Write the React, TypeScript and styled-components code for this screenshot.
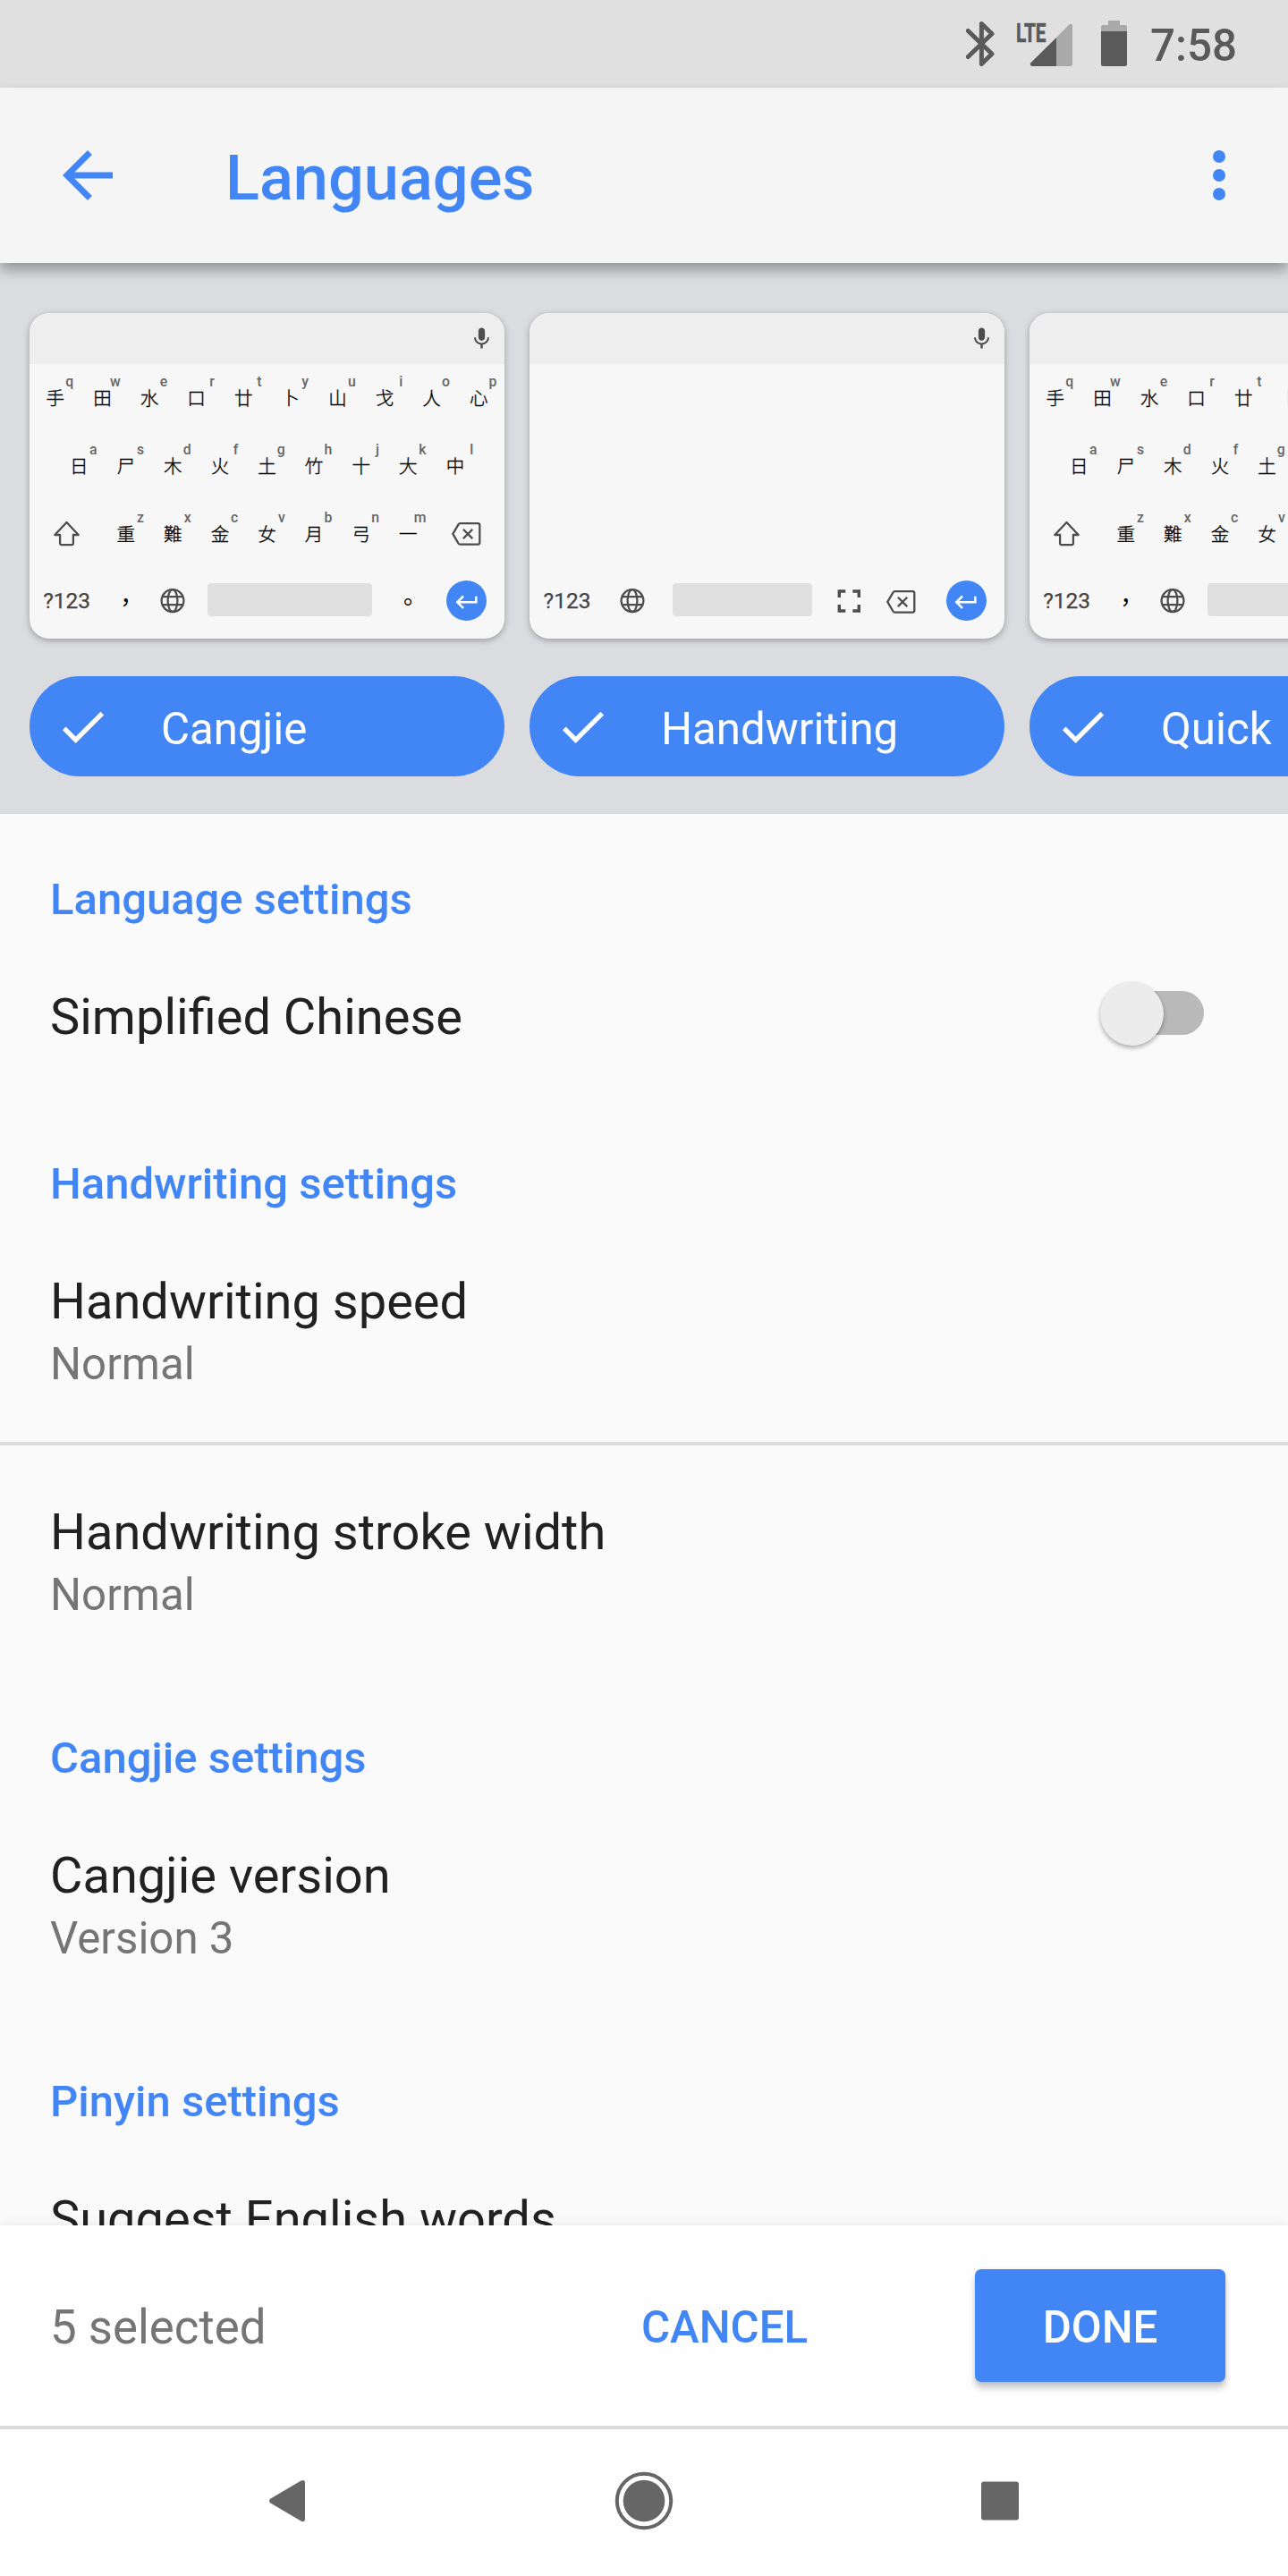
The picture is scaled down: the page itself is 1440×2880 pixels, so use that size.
import React from "react";
import styled, { createGlobalStyle } from "styled-components";

const BLUE = "#4286f5";
const KEY_ICON = "#4d4d4d";

const GlobalStyle = createGlobalStyle`
  * { box-sizing: border-box; }
  body { margin: 0; font-family: Roboto, "Noto Sans CJK TC", sans-serif; }
`;

const Screen = styled.div`
  width: 1440px;
  height: 2880px;
  display: flex;
  flex-direction: column;
  overflow: hidden;
  background: #fafafa;
`;

/* Status bar */
const StatusBar = styled.div`
  flex: none;
  height: 98px;
  padding-right: 57px;
  display: flex;
  justify-content: flex-end;
  background: #e0e0e0;
`;

const StatusIcons = styled.svg`
  width: 192px;
  height: 98px;
`;

const LteText = styled.text`
  font: 700 30px Roboto, sans-serif;
  fill: #5a5a5a;
  stroke: #5a5a5a;
  stroke-width: 0.6;
`;

const Clock = styled.div`
  width: 97px;
  margin-left: 14px;
  padding-top: 22px;
  font-size: 49.3px;
  font-weight: 500;
  line-height: 58px;
  color: #5a5a5a;
`;

/* App bar */
const AppBar = styled.header`
  flex: none;
  position: relative;
  z-index: 1;
  height: 196px;
  padding: 0 35px 0 56px;
  display: flex;
  align-items: center;
  background: #f5f5f5;
  box-shadow: 0 8px 14px rgba(0, 0, 0, 0.32);
`;

const BarIcon = styled.svg`
  width: 84px;
  height: 84px;
  fill: ${BLUE};
`;

const Title = styled.h1`
  flex: 1;
  margin: 0 0 0 112px;
  padding-top: 6px;
  font-size: 70.3px;
  font-weight: 500;
  line-height: 82px;
  color: ${BLUE};
`;

/* Layout previews */
const Strip = styled.section`
  flex: none;
  height: 616px;
  padding: 56px 0 0 33px;
  display: flex;
  gap: 28px;
  overflow: hidden;
  background: #dadce0;
`;

const Layout = styled.div`
  flex: none;
  width: 531px;
`;

const Card = styled.div`
  height: 364px;
  border-radius: 22px;
  overflow: hidden;
  background: #f7f7f7;
  box-shadow: 0 2px 7px rgba(0, 0, 0, 0.3);
`;

const Suggestions = styled.div`
  height: 57px;
  padding-right: 11px;
  display: flex;
  align-items: center;
  justify-content: flex-end;
  background: #eeeeee;
`;

const MicIcon = styled.svg`
  width: 29px;
  height: 29px;
  fill: ${KEY_ICON};
`;

const Keys = styled.div`
  padding: 0 2.5px;
`;

const KeyRow = styled.div<{ $lift?: boolean }>`
  height: 76px;
  display: flex;
  justify-content: center;
  padding-bottom: ${(p) => (p.$lift ? 1 : 0)}px;
`;

const Blank = styled.div`
  height: 228px;
`;

const Key = styled.div<{ $w?: number }>`
  flex: none;
  position: relative;
  width: ${(p) => p.$w ?? 52.6}px;
  display: flex;
  align-items: center;
  justify-content: center;
  font-family: "Noto Sans CJK TC", sans-serif;
  font-size: 20.5px;
  font-weight: 300;
  line-height: 30px;
  padding-bottom: 2px;
  color: #000;
  -webkit-text-stroke: 0.35px #000;
`;

const Hint = styled.span`
  position: absolute;
  top: 12px;
  right: 6px;
  font-family: Roboto, sans-serif;
  font-size: 15.8px;
  font-weight: 500;
  line-height: 15px;
  color: #666;
  -webkit-text-stroke: 0;
`;

const EnterSlot = styled(Key)`
  margin: 0 0.5px 0 auto;
`;

const Punctuation = styled(Key)`
  font-size: 26px;
  font-weight: 400;
  -webkit-text-stroke: 0;
`;

const SymbolKey = styled(Key)`
  font-family: Roboto, sans-serif;
  font-size: 24.5px;
  font-weight: 400;
  color: #444;
  -webkit-text-stroke: 0.25px #444;
`;

const SpaceBar = styled.div<{ $w: number }>`
  flex: none;
  width: ${(p) => p.$w}px;
  height: 37px;
  margin: 17px 13.5px 0 12.5px;
  border-radius: 4px;
  background: #e0e0e0;
`;

const EnterButton = styled.div`
  width: 45px;
  height: 45px;
  border-radius: 50%;
  display: flex;
  align-items: center;
  justify-content: center;
  padding-top: 3px;
  background: ${BLUE};
`;

const EnterIcon = styled.svg`
  width: 30.4px;
  height: 30.4px;
  fill: #fff;
`;

const KeyIcon = styled.svg`
  width: 36px;
  height: 32px;
  fill: none;
  stroke: ${KEY_ICON};
  stroke-width: 2.3;
`;

const Pill = styled.div`
  height: 112px;
  margin-top: 42px;
  padding-left: 28px;
  border-radius: 56px;
  display: flex;
  align-items: center;
  gap: 56px;
  overflow: hidden;
  font-size: 49.2px;
  line-height: 58px;
  color: #fff;
  background: ${BLUE};
`;

const CheckIcon = styled.svg`
  width: 63px;
  height: 63px;
  fill: #fff;
`;

const PillLabel = styled.span`
  padding-top: 5px;
`;

/* Settings */
const Settings = styled.main`
  flex: 1;
  min-height: 0;
  overflow: hidden;
`;

const SectionTitle = styled.h2`
  margin: 0;
  padding: 67px 56px 5px;
  font-size: 49px;
  font-weight: 500;
  line-height: 58px;
  color: ${BLUE};
`;

const Item = styled.div<{ $divided?: boolean }>`
  padding: 64px 94px 58px 56px;
  display: flex;
  align-items: flex-start;
  justify-content: space-between;
  border-bottom: ${(p) => (p.$divided ? "4px solid #dbdbdb" : "none")};
`;

const ItemTitle = styled.div`
  font-size: 56px;
  line-height: 66px;
  color: #212121;
`;

const ItemValue = styled.div`
  margin-top: 8px;
  font-size: 49.2px;
  line-height: 58px;
  color: #757575;
`;

const Toggle = styled.div`
  width: 116px;
  height: 71px;
  margin: -6px 0 1px;
  display: grid;
  align-items: center;
`;

const Track = styled.div`
  grid-area: 1 / 1;
  justify-self: end;
  width: 105px;
  height: 49px;
  margin-bottom: 2px;
  border-radius: 25px;
  background: #b9b9b9;
`;

const Thumb = styled.div`
  grid-area: 1 / 1;
  width: 71px;
  height: 71px;
  border-radius: 50%;
  background: #ececec;
  box-shadow: 0 3px 5px rgba(0, 0, 0, 0.28), 0 0 3px rgba(0, 0, 0, 0.08);
`;

/* Bottom */
const Actions = styled.footer`
  flex: none;
  position: relative;
  height: 228px;
  padding: 0 70px 0 56px;
  display: flex;
  align-items: center;
  border-bottom: 4px solid #dcdcdc;
  background: #fefefe;
  box-shadow: 0 0 12px rgba(0, 0, 0, 0.08);
`;

const Count = styled.div`
  flex: 1;
  padding-top: 3px;
  font-size: 52.8px;
  line-height: 62px;
  color: #757575;
`;

const Button = styled.button<{ $filled?: boolean }>`
  width: ${(p) => (p.$filled ? 280 : 304)}px;
  height: 126px;
  margin: 0 ${(p) => (p.$filled ? 0 : 128)}px 0 0;
  padding: 4px 0 0;
  border: 0;
  border-radius: 7px;
  font: 500 49.2px/58px Roboto, sans-serif;
  color: ${(p) => (p.$filled ? "#fff" : BLUE)};
  background: ${(p) => (p.$filled ? BLUE : "transparent")};
  box-shadow: ${(p) => (p.$filled ? "0 7px 7px rgba(0, 0, 0, 0.2), 0 1px 4px rgba(0, 0, 0, 0.1)" : "none")};
`;

const NavBar = styled.nav`
  flex: none;
  position: relative;
  height: 164px;
  padding: 0 1px 4px 0;
  display: grid;
  grid-template-columns: repeat(3, 398.5px);
  justify-content: center;
  place-items: center;
  background: #fefefe;
`;

const NavIcon = styled.svg`
  width: 68px;
  height: 68px;
  fill: #666;
`;

const Globe = () => (
  <KeyIcon viewBox="0 0 36 32">
    <circle cx="18" cy="15.6" r="12.4" />
    <ellipse cx="18" cy="15.6" rx="5.4" ry="12.4" />
    <path d="M6.5 11.2h23M6.5 20.2h23" />
  </KeyIcon>
);

const Backspace = () => (
  <KeyIcon viewBox="0.7 0 36 32" strokeLinejoin="round">
    <path d="M11.2 5.2H31a2 2 0 0 1 2 2v19.4a2 2 0 0 1-2 2H11.2a2.4 2.4 0 0 1-2-1.1L3 16.9l6.2-10.6a2.4 2.4 0 0 1 2-1.1Z" />
    <path d="m14.6 11.7 10.4 10.4M25 11.7 14.6 22.1" />
  </KeyIcon>
);

const Shift = () => (
  <KeyIcon viewBox="0.5 0 36 32" strokeLinejoin="round">
    <path d="M18 4 4.8 18h5.8v9.6a1.5 1.5 0 0 0 1.5 1.5h11.8a1.5 1.5 0 0 0 1.5-1.5V18h5.8Z" />
  </KeyIcon>
);

const ExpandIcon = styled(KeyIcon)`
  stroke-width: 3.4;
`;

const Expand = () => (
  <ExpandIcon viewBox="0.7 0 36 32">
    <path d="M7 12V5h7M22 5h7v7M29 20v7h-7M14 27H7v-7" />
  </ExpandIcon>
);

const Enter = () => (
  <EnterSlot $w={79}>
    <EnterButton>
      <EnterIcon viewBox="0 0 24 24">
        <path d="M19 7v4H5.83l3.58-3.59L8 6l-6 6 6 6 1.41-1.41L5.83 13H21V7z" />
      </EnterIcon>
    </EnterButton>
  </EnterSlot>
);

const LetterKeys = ({ glyphs, hints }: { glyphs: string; hints: string }) => (
  <>
    {[...glyphs].map((glyph, i) => (
      <Key key={glyph}>
        {glyph}
        <Hint>{hints[i]}</Hint>
      </Key>
    ))}
  </>
);

const CangjieKeys = () => (
  <Keys>
    <KeyRow>
      <LetterKeys glyphs="手田水口廿卜山戈人心" hints="qwertyuiop" />
    </KeyRow>
    <KeyRow>
      <LetterKeys glyphs="日尸木火土竹十大中" hints="asdfghjkl" />
    </KeyRow>
    <KeyRow>
      <Key $w={78.9}><Shift /></Key>
      <LetterKeys glyphs="重難金女月弓一" hints="zxcvbnm" />
      <Key $w={78.9}><Backspace /></Key>
    </KeyRow>
    <KeyRow $lift>
      <SymbolKey $w={78.9}>?123</SymbolKey>
      <Punctuation>，</Punctuation>
      <Key><Globe /></Key>
      <SpaceBar $w={184.4} />
      <Punctuation>。</Punctuation>
      <Enter />
    </KeyRow>
  </Keys>
);

const HandwritingKeys = () => (
  <Keys>
    <Blank />
    <KeyRow $lift>
      <SymbolKey $w={79}>?123</SymbolKey>
      <Key $w={66}><Globe /></Key>
      <SpaceBar $w={156} />
      <Key $w={57}><Expand /></Key>
      <Key $w={59}><Backspace /></Key>
      <Enter />
    </KeyRow>
  </Keys>
);

const LayoutPreview = ({ name, handwriting }: { name: string; handwriting?: boolean }) => (
  <Layout>
    <Card>
      <Suggestions>
        <MicIcon viewBox="0 0 24 24">
          <path d="M12 14c1.66 0 2.99-1.34 2.99-3L15 5c0-1.66-1.34-3-3-3S9 3.34 9 5v6c0 1.66 1.34 3 3 3zm5.3-3c0 3-2.54 5.1-5.3 5.1S6.7 14 6.7 11H5c0 3.41 2.72 6.23 6 6.72V21h2v-3.28c3.28-.48 6-3.3 6-6.72h-1.7z" />
        </MicIcon>
      </Suggestions>
      {handwriting ? <HandwritingKeys /> : <CangjieKeys />}
    </Card>
    <Pill>
      <CheckIcon viewBox="0 0 24 24">
        <path d="M9 16.17 4.83 12l-1.42 1.41L9 19 21 7l-1.41-1.41z" />
      </CheckIcon>
      <PillLabel>{name}</PillLabel>
    </Pill>
  </Layout>
);

const Setting = ({ title, value, divided }: { title: string; value?: string; divided?: boolean }) => (
  <Item $divided={divided}>
    <div>
      <ItemTitle>{title}</ItemTitle>
      {value && <ItemValue>{value}</ItemValue>}
    </div>
  </Item>
);

export default function App() {
  return (
    <Screen>
      <GlobalStyle />
      <StatusBar>
        <StatusIcons viewBox="1080 0 192 98">
          <path
            d="M1082.3 34.5 1109 60.3 1097.4 71.5V26.5L1109 37.7 1082.3 63.5"
            fill="none"
            stroke="#5a5a5a"
            strokeWidth="5"
            strokeLinecap="round"
            strokeLinejoin="round"
          />
          <LteText x="1136" y="46.5" textLength="33.5" lengthAdjust="spacingAndGlyphs">LTE</LteText>
          <path d="M1181 42 1195 27.8Q1199 25.4 1199 29V72Q1199 74 1197 74H1181Z" fill="#a9a9a9" />
          <path d="M1181 42V74H1154Q1150.5 73 1152.4 70.2Z" fill="#5a5a5a" />
          <path d="M1239 23h13v5h6a2 2 0 0 1 2 2v5h-29v-5a2 2 0 0 1 2-2h6Z" fill="#a9a9a9" />
          <path d="M1231 35h29v37a2 2 0 0 1-2 2h-25a2 2 0 0 1-2-2Z" fill="#5a5a5a" />
        </StatusIcons>
        <Clock>7:58</Clock>
      </StatusBar>
      <AppBar>
        <BarIcon viewBox="0 0 24 24">
          <path d="M20 11H7.83l5.59-5.59L12 4l-8 8 8 8 1.41-1.41L7.83 13H20v-2z" />
        </BarIcon>
        <Title>Languages</Title>
        <BarIcon viewBox="0 0 24 24">
          <circle cx="12" cy="6" r="2" />
          <circle cx="12" cy="12" r="2" />
          <circle cx="12" cy="18" r="2" />
        </BarIcon>
      </AppBar>
      <Strip>
        <LayoutPreview name="Cangjie" />
        <LayoutPreview name="Handwriting" handwriting />
        <LayoutPreview name="Quick" />
      </Strip>
      <Settings>
        <SectionTitle>Language settings</SectionTitle>
        <Item>
          <ItemTitle>Simplified Chinese</ItemTitle>
          <Toggle>
            <Track />
            <Thumb />
          </Toggle>
        </Item>
        <SectionTitle>Handwriting settings</SectionTitle>
        <Setting title="Handwriting speed" value="Normal" divided />
        <Setting title="Handwriting stroke width" value="Normal" />
        <SectionTitle>Cangjie settings</SectionTitle>
        <Setting title="Cangjie version" value="Version 3" />
        <SectionTitle>Pinyin settings</SectionTitle>
        <Setting title="Suggest English words" />
      </Settings>
      <Actions>
        <Count>5 selected</Count>
        <Button>CANCEL</Button>
        <Button $filled>DONE</Button>
      </Actions>
      <NavBar>
        <NavIcon viewBox="0 0 68 68">
          <path d="M15.5 31.5 49.5 11.6Q54 9.6 54 14V54Q54 58.6 49.5 56.4L15.5 36.5Q12.5 34 15.5 31.5Z" />
        </NavIcon>
        <NavIcon viewBox="0 0 68 68">
          <circle cx="34" cy="34" r="30.2" fill="none" stroke="#666" strokeWidth="4" />
          <circle cx="34" cy="34" r="23.3" />
        </NavIcon>
        <NavIcon viewBox="0 0 68 68">
          <rect x="13" y="12.5" width="42" height="43" rx="3" />
        </NavIcon>
      </NavBar>
    </Screen>
  );
}
